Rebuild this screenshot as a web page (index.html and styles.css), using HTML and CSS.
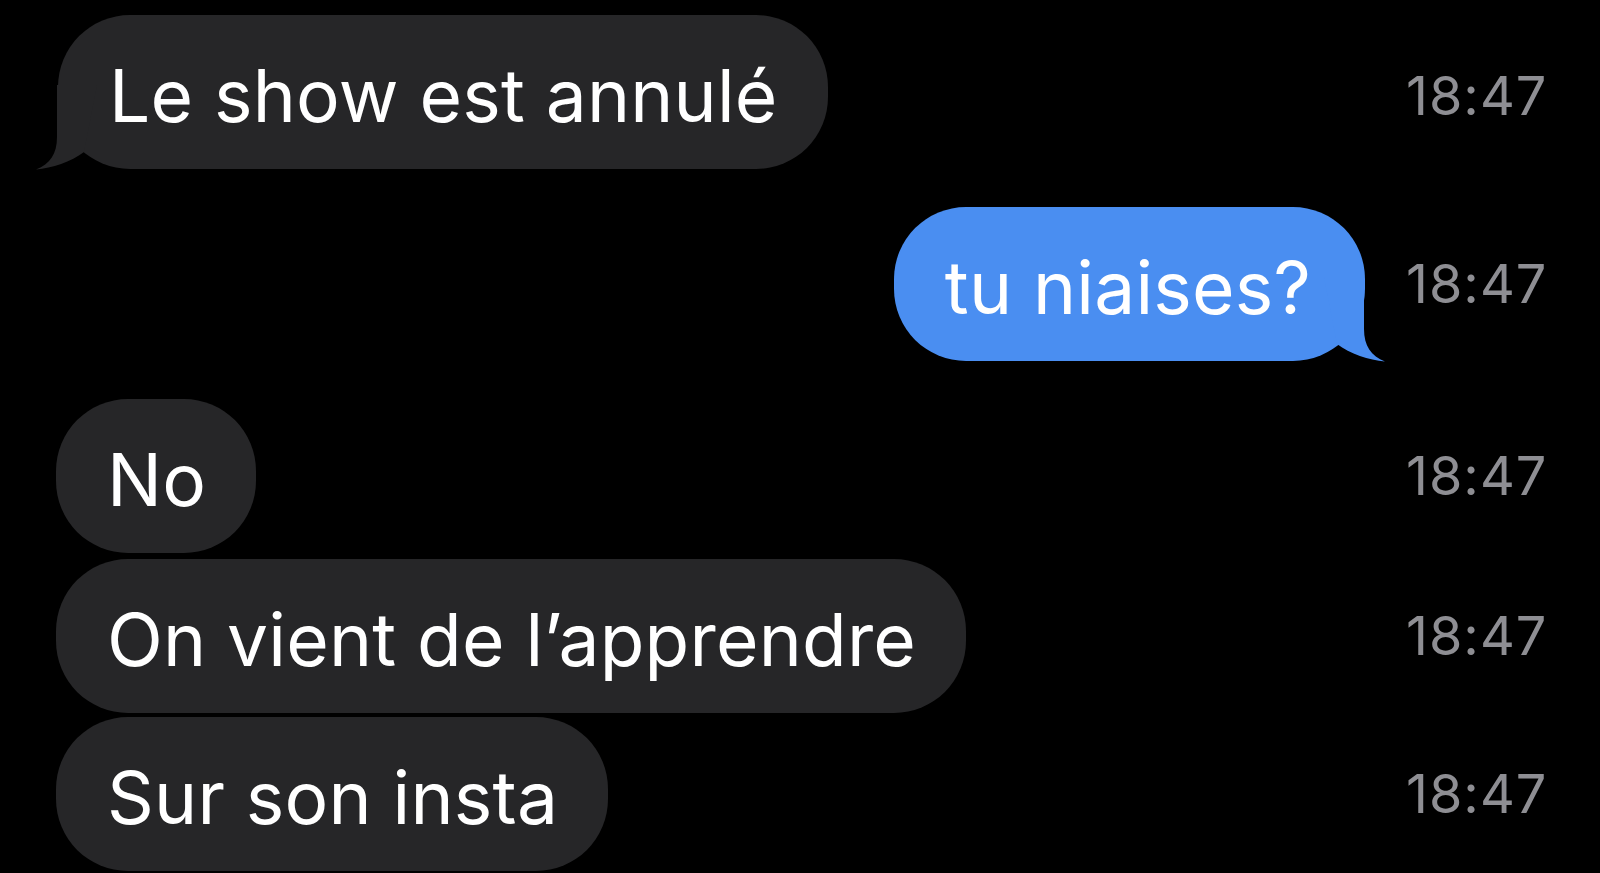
FILE: index.html
```html
<!DOCTYPE html>
<html lang="fr">
<head>
<meta charset="utf-8">
<title>Messages</title>
<link rel="stylesheet" href="styles.css">
</head>
<body>
<main class="thread">
  <div class="row row-first">
    <div class="bubble them tail">
      <span>Le show est annulé</span>
      <svg class="tail-svg" viewBox="0 0 62 85" width="62" height="85" aria-hidden="true"><path d="M40 0 L40 52 C40 69 47 79 61 84.5 C45 83 26 77 13 67 L0 0 Z"/></svg>
    </div>
    <time class="time first-time">18:47</time>
  </div>
  <div class="row row-gap">
    <div class="bubble me tail">
      <span>tu niaises?</span>
      <svg class="tail-svg" viewBox="0 0 62 85" width="62" height="85" aria-hidden="true"><path d="M40 0 L40 52 C40 69 47 79 61 84.5 C45 83 26 77 13 67 L0 0 Z"/></svg>
    </div>
    <time class="time">18:47</time>
  </div>
  <div class="row row-gap">
    <div class="bubble them"><span>No</span></div>
    <time class="time">18:47</time>
  </div>
  <div class="row row-tight">
    <div class="bubble them"><span>On vient de l’apprendre</span></div>
    <time class="time">18:47</time>
  </div>
  <div class="row row-tight2">
    <div class="bubble them"><span>Sur son insta</span></div>
    <time class="time">18:47</time>
  </div>
</main>
</body>
</html>
```
FILE: styles.css
```css
* { box-sizing: border-box; }
html, body { margin: 0; padding: 0; background: #000; }
body {
  font-family: Inter, "Noto Sans", "Liberation Sans", sans-serif;
  color: #fff;
  width: 1600px;
  height: 873px;
  overflow: hidden;
}
.thread {
  display: flex;
  flex-direction: column;
  padding: 15px 54px 0 56px;
}
.row {
  display: grid;
  grid-template-columns: 1fr 140px;
  column-gap: 41px;
  align-items: center;
  height: 154px;
}
.row-gap { margin-top: 38px; }
.row-tight { margin-top: 6px; }
.row-tight2 { margin-top: 4px; }
.row-first { padding-left: 2px; }
.bubble {
  position: relative;
  height: 154px;
  display: flex;
  align-items: center;
  padding: 7px 50px 0 51px;
  border-radius: 72px;
  font-size: 73px;
  line-height: 1;
  letter-spacing: 0.2px;
  white-space: nowrap;
}
.bubble span { position: relative; z-index: 1; }
.them { background: #262628; justify-self: start; fill: #262628; }
.me { background: #4a8ef1; justify-self: end; fill: #4a8ef1; padding-left: 51px; padding-right: 54px; }
.tail-svg { position: absolute; bottom: -1px; }
.me .tail-svg { right: -21px; }
.them .tail-svg { left: -23px; transform: scaleX(-1); }
.time {
  font-size: 54px;
  color: #8e8e93;
  text-align: right;
  letter-spacing: 1px;
  line-height: 1;
  white-space: nowrap;
}
.first-time { padding-top: 8px; }
```
